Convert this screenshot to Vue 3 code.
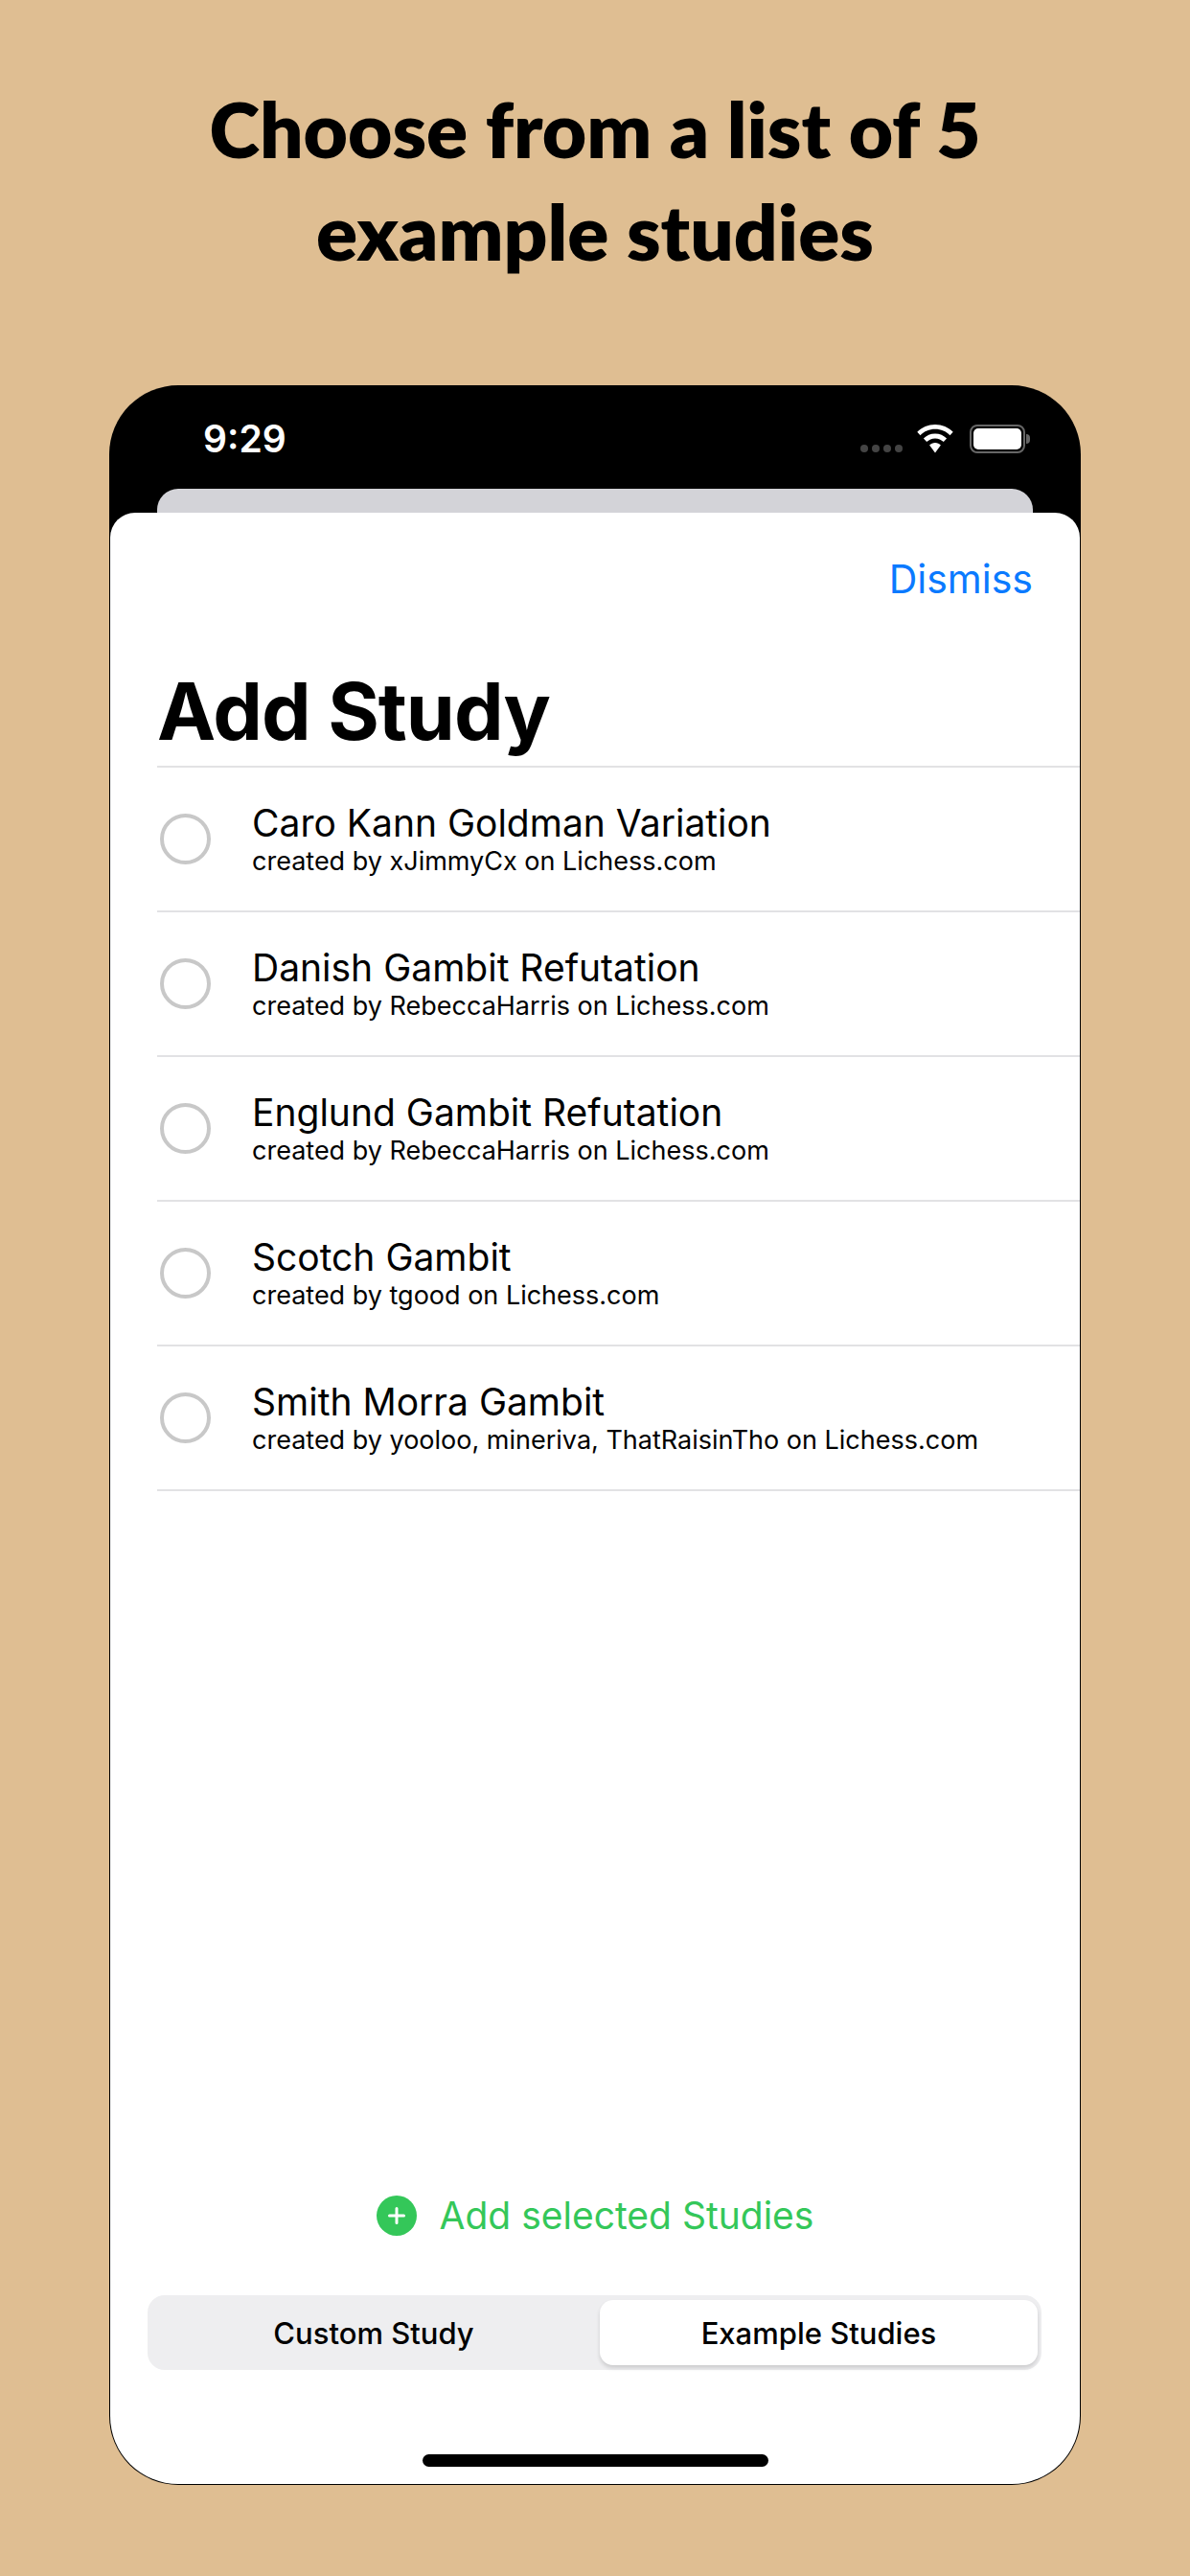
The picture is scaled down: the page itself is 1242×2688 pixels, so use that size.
<template>
  <div class="page">
    <h1 class="headline">Choose from a list of 5<br />example studies</h1>

    <div class="phone">
      <div class="status-bar">
        <span class="time">9:29</span>
        <div class="status-icons">
          <div class="signal">
            <i v-for="n in 4" :key="n"></i>
          </div>
          <svg class="wifi" viewBox="0 0 38 30" width="38" height="30">
            <path d="M19 0C11.700 0 5.100 2.900 0.300 7.700L3.500 11.200C7.500 7.200 13 4.800 19 4.800C25 4.800 30.500 7.200 34.500 11.200L37.700 7.700C32.900 2.900 26.300 0 19 0Z" fill="#fff" />
            <path d="M19 9.500C14.300 9.500 10 11.400 6.900 14.600L10.200 18.100C12.500 15.800 15.600 14.400 19 14.400C22.400 14.400 25.500 15.800 27.800 18.100L31.100 14.600C28 11.400 23.700 9.500 19 9.500Z" fill="#fff" />
            <path d="M19 19C16.700 19 14.600 19.900 13.100 21.500L19 29.500L24.900 21.500C23.400 19.900 21.300 19 19 19Z" fill="#fff" />
          </svg>
          <div class="battery">
            <div class="battery-level"></div>
          </div>
          <div class="battery-nub"></div>
        </div>
      </div>
      <div class="back-card"></div>

      <div class="sheet">
        <div class="sheet-top">
          <span class="dismiss">Dismiss</span>
        </div>
        <h2 class="title">Add Study</h2>

        <ul class="study-list">
          <li v-for="study in studies" :key="study.name" class="study-row">
            <span class="radio"></span>
            <div class="study-text">
              <div class="study-name">{{ study.name }}</div>
              <div class="study-author">created by {{ study.author }} on Lichess.com</div>
            </div>
          </li>
        </ul>

        <div class="add-btn">
          <svg class="add-icon" viewBox="0 0 42 42" width="42" height="42">
            <circle cx="21" cy="21" r="21" fill="#34c759" />
            <path d="M21 13.500V28.500M13.500 21H28.500" stroke="#fff" stroke-width="3" stroke-linecap="round" />
          </svg>
          <span>Add selected Studies</span>
        </div>

        <div class="segmented">
          <div class="segment">Custom Study</div>
          <div class="segment active">Example Studies</div>
        </div>

        <div class="home-indicator"></div>
      </div>
    </div>
  </div>
</template>

<script setup>
const studies = [
  { name: 'Caro Kann Goldman Variation', author: 'xJimmyCx' },
  { name: 'Danish Gambit Refutation', author: 'RebeccaHarris' },
  { name: 'Englund Gambit Refutation', author: 'RebeccaHarris' },
  { name: 'Scotch Gambit', author: 'tgood' },
  { name: 'Smith Morra Gambit', author: 'yooloo, mineriva, ThatRaisinTho' }
]
</script>

<style>
body {
  margin: 0;
  background: #dfbe92;
}
</style>

<style scoped>
.page {
  width: 1242px;
  height: 2688px;
  background: #dfbe92;
  padding-top: 81px;
  box-sizing: border-box;
  font-family: Inter, "Liberation Sans", sans-serif;
  overflow: hidden;
}

.headline {
  margin: 0;
  height: 321px;
  text-align: center;
  font-family: Lato, "Noto Sans", sans-serif;
  font-size: 80px;
  line-height: 107px;
  font-weight: 800;
  color: #000;
}

.phone {
  width: 1014px;
  height: 2191px;
  margin-left: 114px;
  background: #000;
  border-radius: 72px;
  overflow: hidden;
  display: flex;
  flex-direction: column;
  padding: 0 1px 1px;
  box-sizing: border-box;
}

.status-bar {
  height: 108px;
  flex: none;
  display: flex;
  justify-content: space-between;
  padding: 36px 52px 0 97px;
  box-sizing: border-box;
}

.time {
  color: #fff;
  font-size: 39px;
  font-weight: 600;
  line-height: 40px;
}

.status-icons {
  display: flex;
  align-items: flex-start;
  padding-top: 5px;
}

.signal {
  display: flex;
  gap: 4px;
  margin-top: 21px;
  margin-right: 15px;
}

.signal i {
  width: 8px;
  height: 8px;
  border-radius: 50%;
  background: #444;
}

.wifi {
  margin-right: 17px;
}

.battery {
  width: 58px;
  height: 30px;
  border: 2px solid #666;
  border-radius: 8px;
  padding: 2px;
  box-sizing: border-box;
}

.battery-level {
  width: 100%;
  height: 100%;
  background: #fff;
  border-radius: 5px;
}

.battery-nub {
  width: 4px;
  height: 10px;
  margin-top: 10px;
  margin-left: 1px;
  background: #666;
  border-radius: 0 4px 4px 0;
}

.back-card {
  flex: none;
  height: 25px;
  margin: 0 49px;
  background: #d3d3d8;
  border-radius: 22px 22px 0 0;
}

.sheet {
  flex: 1;
  background: #fff;
  border-radius: 26px 26px 71px 71px;
  display: flex;
  flex-direction: column;
  padding-left: 49px;
  min-height: 0;
}

.sheet-top {
  flex: none;
  display: flex;
  justify-content: flex-end;
  padding: 44px 49px 0 0;
}

.dismiss {
  color: #0a7aff;
  font-size: 41px;
  line-height: 50px;
}

.title {
  margin: 62px 0 0;
  font-size: 82px;
  line-height: 104px;
  font-weight: 700;
  color: #000;
  letter-spacing: -1px;
}

.study-list {
  list-style: none;
  margin: 0;
  padding: 0;
  margin-top: 4px;
  border-top: 2px solid #e2e2e4;
}

.study-row {
  height: 151px;
  box-sizing: border-box;
  display: flex;
  align-items: center;
  border-bottom: 2px solid #e2e2e4;
}

.radio {
  flex: none;
  width: 53px;
  height: 53px;
  margin-left: 3px;
  margin-right: 43px;
  border: 4px solid #c8c8c8;
  border-radius: 50%;
  box-sizing: border-box;
}

.study-name {
  font-size: 39px;
  line-height: 46px;
  color: #000;
}

.study-author {
  font-size: 27px;
  line-height: 34px;
  color: #000;
}

.add-btn {
  margin-top: auto;
  margin-left: -49px;
  display: flex;
  justify-content: center;
  align-items: center;
  gap: 24px;
  color: #34c759;
  font-size: 39px;
  line-height: 50px;
}

.segmented {
  flex: none;
  margin: 58px 40px 0 -10px;
  height: 78px;
  display: grid;
  grid-template-columns: 1fr 457px;
  background: #eeeef0;
  border-radius: 18px;
  padding: 5px 4px 5px 0;
  box-sizing: border-box;
}

.segment {
  display: flex;
  align-items: center;
  justify-content: center;
  font-size: 31px;
  font-weight: 500;
  color: #000;
}

.active {
  background: #fff;
  border-radius: 14px;
  box-shadow: 0 3px 4px rgba(0, 0, 0, 0.14);
}

.home-indicator {
  flex: none;
  align-self: center;
  margin: 88px 0 18px -49px;
  width: 361px;
  height: 13px;
  background: #000;
  border-radius: 7px;
}
</style>
